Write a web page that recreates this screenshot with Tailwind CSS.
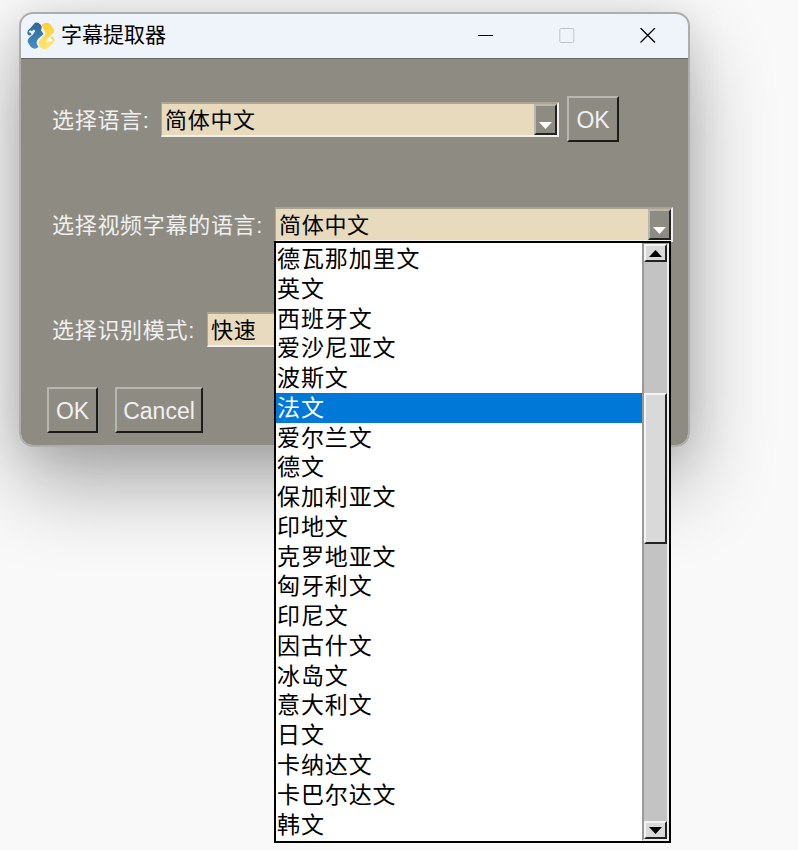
<!DOCTYPE html>
<html lang="zh-CN">
<head>
  <meta charset="UTF-8" />
  <meta name="viewport" content="width=device-width, initial-scale=1" />
  <title>字幕提取器</title>
  <script src="https://cdn.jsdelivr.net/npm/@tailwindcss/browser@4"></script>
</head>
<body class="h-[850px] w-[798px] overflow-hidden bg-[#f9f9f9] pt-[12px] pl-[19px] font-['Liberation_Sans','Noto_Sans_CJK_SC',sans-serif] text-[22px] text-[#f0f0f0]">
  <!-- Window -->
  <div class="relative h-[435px] w-[671px] rounded-[14px] border-2 border-[#adadad] shadow-[0_38px_84px_rgba(0,0,0,0.32),0_4px_40px_rgba(0,0,0,0.10)]">
    <div class="flex h-full flex-col overflow-hidden rounded-[12px] bg-[#8e8b82]">
      <!-- Title bar -->
      <div class="flex h-[45px] shrink-0 items-center border-b border-[#66645e] bg-[#eff4fb] pl-[6px] text-black">
        <svg class="-mt-px h-[28px] w-[28px] shrink-0" viewBox="0 0 28 28">
          <defs>
            <linearGradient id="blue" x1="0" y1="0" x2="0" y2="1"><stop offset="0" stop-color="#2d6696" /><stop offset="1" stop-color="#478fc8" /></linearGradient>
            <linearGradient id="yellow" x1="0" y1="0" x2="0" y2="1"><stop offset="0" stop-color="#ffcf31" /><stop offset="1" stop-color="#ffe773" /></linearGradient>
          </defs>
          <path d="M8 .8Q11 0 13.500 2.500L14.800 5L14 8.500L16.500 12L11 17Q9 19.500 10 22.500L11.500 25Q7 28.500 3.500 24.500L1 20.500Q0 18 2.500 15.500L6 12.500L8.200 9L7 7.500L3.500 10L4.500 13Q.5 14.500 .3 10.500Q.3 8 3 6.500Z" fill="url(#blue)" />
          <path d="M15 2.500Q20 -1 24 3L27 7.500Q28 10 25 12.500L20.500 16.500L19 19.500L21 20.800L24 18.500L23.500 15Q27.500 14 27.500 18Q27.500 20.500 25 22L19.500 27Q16 28 13 25.500L11.500 22Q11 19.500 13.500 17.500L17.500 13.500Q19 11.500 17.500 9L15.500 5.500Z" fill="url(#yellow)" />
          <circle cx="3.400" cy="9.600" r="1.200" fill="#fff" />
          <circle cx="24.300" cy="18.500" r="1.200" fill="#fff" />
        </svg>
        <span class="ml-[6px] -mt-[4px] text-[21px] font-['Noto_Sans_CJK_SC',sans-serif]">字幕提取器</span>
        <div class="mr-[32px] ml-auto flex gap-[65px]">
          <svg class="size-[16px]" viewBox="0 0 16 16" fill="none" stroke="#000"><path d="M0 7.500h15" /></svg>
          <svg class="size-[16px]" viewBox="0 0 16 16" fill="none" stroke="#c0c4c8"><rect x=".8" y=".5" width="14" height="14" rx="1.200" /></svg>
          <svg class="size-[16px]" viewBox="0 0 16 16" fill="none" stroke="#000" stroke-width="1.300"><path d="M.5 0l14.500 14.500M15 0l-14.500 14.500" /></svg>
        </div>
      </div>

      <!-- Interface language -->
      <div class="mt-[37px] flex h-[46px] shrink-0 items-center pl-[31px]">
        <span class="w-[109px] pt-[2px] whitespace-nowrap tracking-[0.7px]">选择语言:</span>
        <div class="flex h-[35px] w-[398px] border-t-2 border-r-2 border-b-2 border-l border-t-[#aca48f] border-r-[#f2f1ed] border-b-[#f2f1ed] border-l-[#aca48f] bg-[#e8dabd] text-black">
          <span class="grow pl-[3px] leading-[34px] tracking-[0.7px]">简体中文</span>
          <div class="flex w-[23px] items-end justify-center border-2 border-t-[#b8b6b0] border-r-[#222] border-b-[#222] border-l-[#b8b6b0] bg-[#8e8b82] pb-[4px]">
            <svg class="h-[7px] w-[13px]" viewBox="0 0 13 7"><path d="M0 0h13L6.500 7z" fill="#fff" /></svg>
          </div>
        </div>
        <button class="ml-[8px] h-[46px] w-[52px] border-2 border-t-[#b8b6b0] border-r-[#1c1c1a] border-b-[#1c1c1a] border-l-[#b8b6b0] pt-[2px] text-[23px]">OK</button>
      </div>

      <!-- Subtitle language -->
      <div class="mt-[65px] flex h-[35px] shrink-0 items-center pl-[31px]">
        <span class="w-[223px] pt-px whitespace-nowrap tracking-[0.7px]">选择视频字幕的语言:</span>
        <div class="flex h-[35px] w-[398px] border-t-2 border-r-2 border-b-2 border-l border-t-[#aca48f] border-r-[#f2f1ed] border-b-[#f2f1ed] border-l-[#aca48f] bg-[#e8dabd] text-black">
          <span class="grow pl-[3px] leading-[34px] tracking-[0.7px]">简体中文</span>
          <div class="flex w-[23px] items-end justify-center border-2 border-t-[#b8b6b0] border-r-[#222] border-b-[#222] border-l-[#b8b6b0] bg-[#8e8b82] pb-[4px]">
            <svg class="h-[7px] w-[13px]" viewBox="0 0 13 7"><path d="M0 0h13L6.500 7z" fill="#fff" /></svg>
          </div>
        </div>
      </div>

      <!-- Recognition mode -->
      <div class="mt-[70px] flex h-[35px] shrink-0 items-center pl-[31px]">
        <span class="w-[155px] pt-px whitespace-nowrap tracking-[0.7px]">选择识别模式:</span>
        <div class="h-[35px] w-[398px] border-t-2 border-b-2 border-l border-t-[#aca48f] border-b-[#f2f1ed] border-l-[#aca48f] bg-[#e8dabd] text-black">
          <span class="block pl-[3px] leading-[34px] tracking-[0.7px]">快速</span>
        </div>
      </div>

      <div class="mt-[40px] flex shrink-0 gap-[17px] pl-[26px] text-[23px]">
        <button class="h-[46px] w-[51px] border-2 border-t-[#b8b6b0] border-r-[#1c1c1a] border-b-[#1c1c1a] border-l-[#b8b6b0] pt-[2px]">OK</button>
        <button class="h-[46px] w-[88px] border-2 border-t-[#b8b6b0] border-r-[#1c1c1a] border-b-[#1c1c1a] border-l-[#b8b6b0] pt-[2px]">Cancel</button>
      </div>
    </div>

    <!-- Dropdown list -->
    <div class="absolute top-[227px] left-[253px] flex h-[602px] w-[397px] border-2 border-black bg-white text-black">
      <ul class="flex h-[597px] w-[366px] shrink-0 flex-col pt-px text-[23px] leading-[30px] tracking-[0.9px] *:h-[29.78px] *:shrink-0 *:pl-px">
        <li>德瓦那加里文</li>
        <li>英文</li>
        <li>西班牙文</li>
        <li>爱沙尼亚文</li>
        <li>波斯文</li>
        <li class="bg-[#0078d7] text-white">法文</li>
        <li>爱尔兰文</li>
        <li>德文</li>
        <li>保加利亚文</li>
        <li>印地文</li>
        <li>克罗地亚文</li>
        <li>匈牙利文</li>
        <li>印尼文</li>
        <li>因古什文</li>
        <li>冰岛文</li>
        <li>意大利文</li>
        <li>日文</li>
        <li>卡纳达文</li>
        <li>卡巴尔达文</li>
        <li>韩文</li>
      </ul>
      <!-- Scrollbar -->
      <div class="flex w-[27px] flex-col border-2 border-t-[#999] border-r-[#eee] border-b-[#eee] border-l-[#999] bg-[#c3c3c3]">
        <div class="-mt-px flex h-[18px] items-center justify-center border-2 border-t-[#f4f4f4] border-r-[#222] border-b-[#222] border-l-[#f4f4f4] bg-[#d9d9d9]">
          <svg class="h-[7px] w-[13px]" viewBox="0 0 13 7"><path d="M0 7h13L6.500 0z" /></svg>
        </div>
        <div class="mt-[131px] h-[151px] border-2 border-t-[#f4f4f4] border-r-[#222] border-b-[#222] border-l-[#f4f4f4] bg-[#d9d9d9]"></div>
        <div class="mt-auto flex h-[18px] items-center justify-center border-2 border-t-[#f4f4f4] border-r-[#222] border-b-[#222] border-l-[#f4f4f4] bg-[#d9d9d9]">
          <svg class="h-[7px] w-[13px]" viewBox="0 0 13 7"><path d="M0 0h13L6.500 7z" /></svg>
        </div>
      </div>
    </div>
  </div>
</body>
</html>
